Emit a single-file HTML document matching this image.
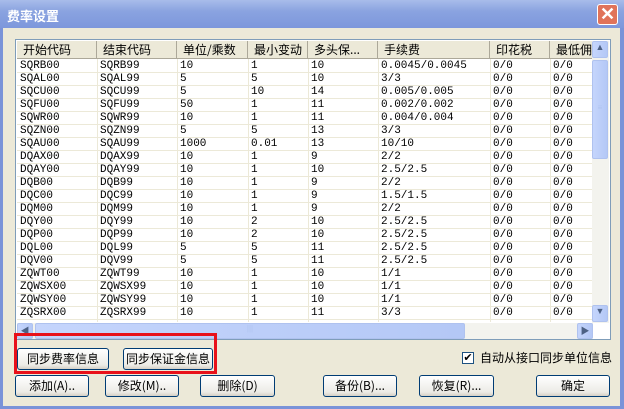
<!DOCTYPE html>
<html><head><meta charset="utf-8"><style>
*{margin:0;padding:0;box-sizing:border-box}
body{width:624px;height:409px;overflow:hidden;background:#ECE9D8;font-family:"Liberation Sans","SimSun","Noto Sans CJK SC",sans-serif;font-size:12px;position:relative}
.frame{position:absolute;left:0;top:0;width:624px;height:409px;border-left:3px solid #7A93D8;border-right:4px solid #7A93D8;border-bottom:3px solid #7A93D8}
.title{position:absolute;left:0;top:0;width:624px;height:28px;background:linear-gradient(#A8BCEA,#8AA3E0 40%,#7D97DC);color:#fff;font-weight:bold;font-size:13px;padding:6px 0 0 7px;font-family:"Liberation Sans","Noto Sans CJK SC",sans-serif}
.close{position:absolute;left:597px;top:4px;width:21px;height:21px;background:#E0735A;border:1px solid #fff;border-radius:3px;color:#fff;font-size:18px;line-height:18px;text-align:center;font-weight:bold}
.list{position:absolute;left:15px;top:39px;width:596px;height:301px;background:#fff;border:1px solid #7F9DB9}
.hdr{position:absolute;left:1px;top:1px;height:18px;width:576px;background:#ECE9D8;border-bottom:1px solid #aca899}
.h{position:absolute;top:0;height:18px;border-right:1px solid #aca899;padding:2px 0 0 6px;font-size:12px;white-space:nowrap;overflow:hidden;font-family:"Noto Sans CJK SC",sans-serif;line-height:14px}
.row{position:absolute;left:1px;width:576px;height:13px;border-bottom:1px solid #ECE9D8;font-family:"Liberation Mono","Noto Sans CJK SC",monospace;font-size:11px;line-height:12px}
.row span{position:absolute;top:0;padding-left:3px;white-space:nowrap}
.vl{position:absolute;top:19px;width:1px;height:263px;background:#ECE9D8}
.vs{position:absolute;left:576px;top:1px;width:17px;height:282px;background:#F3F3EE}
.hs{position:absolute;left:1px;top:283px;width:576px;height:16px;background:#F3F3EE}
.sb{position:absolute;background:linear-gradient(90deg,#C5D5FC,#B4C8F6);border:1px solid #AFC2EF;border-radius:2px}
.btn{position:absolute;height:22px;background:linear-gradient(#fff,#ECEBE6 80%,#D6D0C5);border:1px solid #003C74;border-radius:3px;text-align:center;font-size:12px;line-height:20px;font-family:"Noto Sans CJK SC",sans-serif}
.red{position:absolute;left:14px;top:333px;width:203px;height:41px;border:3px solid #E8111A}
</style></head><body>
<div class="frame"></div>
<div class="title">费率设置</div>
<div class="close">✕</div>
<div class="list">
<div class="hdr">
<div class="h" style="left:0;width:80px">开始代码</div>
<div class="h" style="left:80px;width:80px">结束代码</div>
<div class="h" style="left:160px;width:71px">单位/乘数</div>
<div class="h" style="left:231px;width:60px">最小变动</div>
<div class="h" style="left:291px;width:70px">多头保...</div>
<div class="h" style="left:361px;width:112px">手续费</div>
<div class="h" style="left:473px;width:60px">印花税</div>
<div class="h" style="left:533px;width:50px">最低佣</div>
</div>
<div id="rows"></div>
<div class="vl" style="left:81px"></div><div class="vl" style="left:161px"></div><div class="vl" style="left:232px"></div><div class="vl" style="left:292px"></div><div class="vl" style="left:362px"></div><div class="vl" style="left:474px"></div><div class="vl" style="left:534px"></div>
<div class="vs">
<div class="sb" style="left:0;top:0;width:16px;height:17px;font-size:9px;text-align:center;color:#4D6185">▲</div>
<div class="sb" style="left:0;top:19px;width:16px;height:99px;text-align:center;color:#B0C4F0;padding-top:42px;font-size:8px">≡</div>
<div class="sb" style="left:0;top:264px;width:16px;height:17px;font-size:9px;text-align:center;color:#4D6185">▼</div>
</div>
<div class="hs">
<div class="sb" style="left:0;top:0;width:16px;height:16px;font-size:9px;text-align:center;color:#4D6185">◀</div>
<div class="sb" style="left:18px;top:0;width:430px;height:16px;text-align:center;color:#B0C4F0;font-size:8px">|||</div>
<div class="sb" style="left:560px;top:0;width:16px;height:16px;font-size:9px;text-align:center;color:#4D6185">▶</div>
</div>
</div>
<div class="red"></div>
<div class="btn" style="left:17px;top:348px;width:92px">同步费率信息</div>
<div class="btn" style="left:123px;top:348px;width:90px">同步保证金信息</div>
<div style="position:absolute;left:462px;top:352px;width:12px;height:12px;border:1px solid #1C5180;background:#fff;font-size:11px;line-height:10px;text-align:center;color:#000">✔</div>
<div style="position:absolute;left:480px;top:349px;font-size:12px;font-family:'Noto Sans CJK SC',sans-serif">自动从接口同步单位信息</div>
<div class="btn" style="left:15px;top:375px;width:74px">添加(A)..</div>
<div class="btn" style="left:105px;top:375px;width:74px">修改(M)..</div>
<div class="btn" style="left:200px;top:375px;width:75px">删除(D)</div>
<div class="btn" style="left:323px;top:375px;width:74px">备份(B)...</div>
<div class="btn" style="left:419px;top:375px;width:75px">恢复(R)...</div>
<div class="btn" style="left:536px;top:375px;width:74px">确定</div>
<script>
var d=[["SQRB00","SQRB99","10","1","10","0.0045/0.0045"],["SQAL00","SQAL99","5","5","10","3/3"],["SQCU00","SQCU99","5","10","14","0.005/0.005"],["SQFU00","SQFU99","50","1","11","0.002/0.002"],["SQWR00","SQWR99","10","1","11","0.004/0.004"],["SQZN00","SQZN99","5","5","13","3/3"],["SQAU00","SQAU99","1000","0.01","13","10/10"],["DQAX00","DQAX99","10","1","9","2/2"],["DQAY00","DQAY99","10","1","10","2.5/2.5"],["DQB00","DQB99","10","1","9","2/2"],["DQC00","DQC99","10","1","9","1.5/1.5"],["DQM00","DQM99","10","1","9","2/2"],["DQY00","DQY99","10","2","10","2.5/2.5"],["DQP00","DQP99","10","2","10","2.5/2.5"],["DQL00","DQL99","5","5","11","2.5/2.5"],["DQV00","DQV99","5","5","11","2.5/2.5"],["ZQWT00","ZQWT99","10","1","10","1/1"],["ZQWSX00","ZQWSX99","10","1","10","1/1"],["ZQWSY00","ZQWSY99","10","1","10","1/1"],["ZQSRX00","ZQSRX99","10","1","11","3/3"]];
var x=[0,80,160,231,291,361,473,533],h="";
d.forEach(function(r,i){r=r.concat(["0/0","0/0"]);h+='<div class="row" style="top:'+(20+i*13)+'px">';r.forEach(function(c,j){h+='<span style="left:'+x[j]+'px">'+c+'</span>'});h+='</div>'});
document.getElementById('rows').innerHTML=h;
</script>
</body></html>
